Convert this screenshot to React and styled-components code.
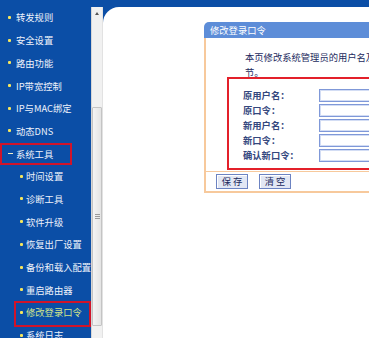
import React from 'react';
import styled, { createGlobalStyle } from 'styled-components';

const Global = createGlobalStyle`
  html, body { margin: 0; padding: 0; width: 369px; height: 338px; overflow: hidden; background: #0b4fa6; }
  * { box-sizing: border-box; }
`;

const FONT = `"Noto Sans CJK SC", "Noto Sans", sans-serif`;

const Page = styled.div`
  display: flex;
  width: 369px;
  height: 338px;
  overflow: hidden;
  background: #0b4ea6;
  font-family: ${FONT};
`;

const Sidebar = styled.nav`
  width: 91px;
  flex: none;
  padding-top: 6.15px;
  display: flex;
  flex-direction: column;
`;

const Item = styled.div`
  position: relative;
  flex: none;
  height: 22.7px;
  display: flex;
  align-items: center;
  padding-left: ${p => (p.$sub ? '20px' : '7.5px')};
  color: ${p => (p.$active ? '#d2e48a' : '#eef2fb')};
  font-size: 9.3px;
  white-space: nowrap;
  &::after {
    content: '';
    display: ${p => (p.$box ? 'block' : 'none')};
    position: absolute;
    left: ${p => (p.$box ? p.$box.left : 0)}px;
    width: ${p => (p.$box ? p.$box.width : 0)}px;
    top: ${p => (p.$box ? p.$box.top : 0)}px;
    bottom: ${p => (p.$box ? p.$box.bottom : 0)}px;
    border: 2px solid #d0142a;
  }
`;

const Bullet = styled.span`
  flex: none;
  width: 3px;
  height: 3px;
  border-radius: 1px;
  background: #f6e65c;
  margin-right: ${p => (p.$sub ? '3px' : '5.5px')};
`;

const Dash = styled.span`
  flex: none;
  width: 5px;
  height: 1.5px;
  background: #f2f0c8;
  margin-right: 3.5px;
`;

const Right = styled.div`
  flex: 1;
  min-width: 0;
  display: flex;
  padding-top: 7px;
`;

const Scrollbar = styled.div`
  width: 12px;
  flex: none;
  background: #f1f1f1;
  border-left: 1px solid #d6d6d6;
  border-right: 1px solid #e2e2e2;
  display: flex;
  flex-direction: column;
  align-items: center;
`;

const UpButton = styled.div`
  height: 12px;
  width: 100%;
  display: flex;
  align-items: center;
  justify-content: center;
  &::before {
    content: '';
    width: 0;
    height: 0;
    border-left: 2.5px solid transparent;
    border-right: 2.5px solid transparent;
    border-bottom: 3px solid #555;
  }
`;

const Thumb = styled.div`
  margin-top: 88px;
  width: 10px;
  height: 219px;
  background: linear-gradient(to right, #f4f4f4, #e4e4e4);
  border: 1px solid #c4c4c4;
  border-radius: 1px;
  display: flex;
  flex-direction: column;
  align-items: center;
  justify-content: center;
  gap: 1px;
`;

const Grip = styled.span`
  width: 5px;
  height: 1px;
  background: #9a9a9a;
`;

const Main = styled.main`
  flex: 1;
  min-width: 0;
  background: #ffffff;
  border-top-left-radius: 16px;
  padding: 15px 0 0 101px;
  overflow: hidden;
`;

const Panel = styled.section`
  width: 240px;
  display: flex;
  flex-direction: column;
  border-bottom: 2px solid #f7c99c;
`;

const Header = styled.div`
  height: 16px;
  background: #5d8dd8;
  border-top-left-radius: 5px;
  color: #ffffff;
  font-size: 9.3px;
  padding-left: 6px;
  display: flex;
  align-items: center;
  white-space: nowrap;
`;

const Body = styled.div`
  border-left: 2px solid #f7c99c;
  background: #ffffff;
  display: flex;
  flex-direction: column;
`;

const Intro = styled.p`
  margin: 11.5px 0 0 39px;
  font-size: 9.3px;
  line-height: 15px;
  color: #1c2a5e;
  white-space: nowrap;
`;

const FormBox = styled.div`
  margin: -2.5px 0 0 21px;
  border: 2px solid #e3202a;
  border-right: none;
  padding: 8.5px 0 5.5px 14px;
  display: grid;
  grid-template-columns: 76px 1fr;
  grid-auto-rows: 15px;
  align-items: center;
`;

const Label = styled.label`
  font-size: 9.3px;
  font-weight: 700;
  color: #34477e;
  white-space: nowrap;
`;

const Input = styled.input`
  height: 13px;
  width: 100%;
  margin: 0;
  padding: 0;
  border: 1px solid #7f98d8;
  box-shadow: inset 0 0 0 1px #d3ddf4;
  background: #ffffff;
  outline: none;
`;

const Footer = styled.div`
  border-top: 1px solid #f7c99c;
  margin-top: 1px;
  padding: 2px 0 2px 10px;
  display: flex;
  gap: 11px;
`;

const Button = styled.button`
  width: 32px;
  height: 15px;
  margin: 0;
  padding: 0;
  font-family: ${FONT};
  font-size: 9.3px;
  letter-spacing: 2px;
  text-indent: 2px;
  color: #1c2a5e;
  background: #e2e7f4;
  border: 1px solid #6c83c2;
  box-shadow: inset 1px 1px 0 #ffffff;
  display: flex;
  align-items: center;
  justify-content: center;
  line-height: 1;
`;

const menu = [
  { label: '转发规则' },
  { label: '安全设置' },
  { label: '路由功能' },
  { label: 'IP带宽控制' },
  { label: 'IP与MAC绑定' },
  { label: '动态DNS' },
  { label: '系统工具', open: true, box: { left: 0, width: 68, top: 0.5, bottom: 0 } },
  { label: '时间设置', sub: true },
  { label: '诊断工具', sub: true },
  { label: '软件升级', sub: true },
  { label: '恢复出厂设置', sub: true },
  { label: '备份和载入配置', sub: true },
  { label: '重启路由器', sub: true },
  { label: '修改登录口令', sub: true, active: true, box: { left: 14, width: 73, top: -0.5, bottom: -3 } },
  { label: '系统日志', sub: true },
];

const fields = ['原用户名：', '原口令：', '新用户名：', '新口令：', '确认新口令：'];

export default function App() {
  return (
    <>
      <Global />
      <Page>
        <Sidebar>
          {menu.map(m => (
            <Item key={m.label} $sub={m.sub} $active={m.active} $box={m.box}>
              {m.open ? <Dash /> : <Bullet $sub={m.sub} />}
              {m.label}
            </Item>
          ))}
        </Sidebar>
        <Right>
          <Scrollbar>
            <UpButton />
            <Thumb>
              <Grip />
              <Grip />
              <Grip />
            </Thumb>
          </Scrollbar>
          <Main>
            <Panel>
              <Header>修改登录口令</Header>
              <Body>
                <Intro>
                  本页修改系统管理员的用户名及口令，用户名及口令长度不能超过14个字
                  <br />
                  节。
                </Intro>
                <FormBox>
                  {fields.map(f => (
                    <React.Fragment key={f}>
                      <Label>{f}</Label>
                      <Input type={f.includes('口令') ? 'password' : 'text'} />
                    </React.Fragment>
                  ))}
                </FormBox>
                <Footer>
                  <Button>保存</Button>
                  <Button>清空</Button>
                </Footer>
              </Body>
            </Panel>
          </Main>
        </Right>
      </Page>
    </>
  );
}
